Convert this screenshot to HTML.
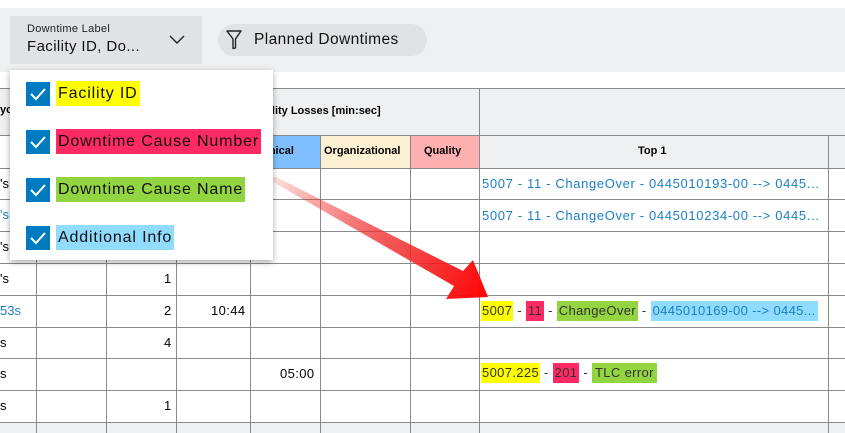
<!DOCTYPE html>
<html><head><meta charset="utf-8"><style>
*{margin:0;padding:0;box-sizing:border-box}
body{width:845px;height:433px;overflow:hidden;background:#fff;font-family:"Liberation Sans",sans-serif;position:relative;color:#000}
.a{position:absolute}
.vl{position:absolute;width:1px;background:#8a8a8a}
.hl{position:absolute;height:1px;background:#8a8a8a}
.t{position:absolute;font-size:13px;white-space:nowrap}
.b{font-weight:bold;font-size:11px}
.lnk{color:#1a7fc6}
.hy{background:#ffff00}.hr{background:#ff2a64}.hg{background:#92d540}.hc{background:#8fdcff}
.cb{position:absolute;left:16px;width:24px;height:24px;background:#007bc0}
.lab{position:absolute;left:46px;height:25px;line-height:25px;font-size:16px;padding:0 2px;color:#111;letter-spacing:.85px}
.hs{display:inline-block;height:20px;line-height:20px;padding:0 2px}
.top{letter-spacing:.65px}
</style></head><body>
<div class="a" style="left:0;top:8px;width:845px;height:64px;background:#eff0f2"></div>
<div class="a" style="left:10px;top:16px;width:192px;height:48px;background:#e0e2e5"></div>
<div class="t" style="left:27px;top:23px;font-size:11px;color:#222;letter-spacing:.3px">Downtime Label</div>
<div class="t" style="left:27px;top:38px;font-size:15px;color:#111;letter-spacing:.4px">Facility ID, Do...</div>
<svg class="a" style="left:168px;top:33px" width="18" height="12"><path d="M2 3 L9 10 L16 3" fill="none" stroke="#222" stroke-width="1.4"/></svg>
<div class="a" style="left:218px;top:24px;width:209px;height:32px;background:#e0e2e5;border-radius:16px"></div>
<svg class="a" style="left:225px;top:29px" width="18" height="22"><path d="M2 2 H16 L10.5 10 V19 L8 19.5 V10 Z" fill="none" stroke="#222" stroke-width="1.4" stroke-linejoin="round"/></svg>
<div class="t" style="left:254px;top:31px;font-size:15.5px;color:#111;letter-spacing:.4px">Planned Downtimes</div>

<div class="a" style="left:0;top:88px;width:845px;height:47px;background:#eff0f2"></div>
<div class="a" style="left:250px;top:135px;width:70px;height:33px;background:#7fbfff"></div>
<div class="a" style="left:320px;top:135px;width:90px;height:33px;background:#fdefd1"></div>
<div class="a" style="left:410px;top:135px;width:69px;height:33px;background:#ffb0b0"></div>
<div class="a" style="left:479px;top:135px;width:366px;height:33px;background:#eff0f2"></div>
<div class="a" style="left:0;top:422px;width:845px;height:11px;background:#eff0f2"></div>
<div class="hl" style="left:0;top:88px;width:845px"></div>
<div class="hl" style="left:0;top:135px;width:845px"></div>
<div class="hl" style="left:0;top:168px;width:845px"></div>
<div class="hl" style="left:0;top:199px;width:845px"></div>
<div class="hl" style="left:0;top:231px;width:845px"></div>
<div class="hl" style="left:0;top:263px;width:845px"></div>
<div class="hl" style="left:0;top:295px;width:845px"></div>
<div class="hl" style="left:0;top:327px;width:845px"></div>
<div class="hl" style="left:0;top:358px;width:845px"></div>
<div class="hl" style="left:0;top:390px;width:845px"></div>
<div class="hl" style="left:0;top:422px;width:845px"></div>
<div class="vl" style="left:36px;top:135px;height:298px"></div>
<div class="vl" style="left:106px;top:135px;height:298px"></div>
<div class="vl" style="left:176px;top:135px;height:298px"></div>
<div class="vl" style="left:250px;top:135px;height:298px"></div>
<div class="vl" style="left:320px;top:135px;height:298px"></div>
<div class="vl" style="left:410px;top:135px;height:298px"></div>
<div class="vl" style="left:479px;top:88px;height:345px"></div>
<div class="vl" style="left:828px;top:135px;height:298px"></div>

<div class="t b" style="left:0;top:104px">yc</div>
<div class="t b" style="left:256px;top:105px">ability Losses [min:sec]</div>
<div class="t b" style="left:256px;top:145px">chnical</div>
<div class="t b" style="left:324px;top:145px">Organizational</div>
<div class="t b" style="left:424px;top:145px">Quality</div>
<div class="t b" style="left:638px;top:145px">Top 1</div>

<div class="t" style="left:0;top:176px">'s</div>
<div class="t lnk" style="left:0;top:207px">'s</div>
<div class="t" style="left:0;top:239px">'s</div>
<div class="t" style="left:0;top:271px">'s</div>
<div class="t lnk" style="left:0;top:303px">53s</div>
<div class="t" style="left:0;top:335px">s</div>
<div class="t" style="left:0;top:366px">s</div>
<div class="t" style="left:0;top:398px">s</div>
<div class="t" style="left:164px;top:271px">1</div>
<div class="t" style="left:164px;top:303px">2</div>
<div class="t" style="left:164px;top:335px">4</div>
<div class="t" style="left:164px;top:398px">1</div>
<div class="t" style="left:211px;top:303px;letter-spacing:.4px">10:44</div>
<div class="t" style="left:280px;top:366px;letter-spacing:.4px">05:00</div>

<div class="t lnk top" style="left:482px;top:176px">5007 - 11 - ChangeOver - 0445010193-00 --&gt; 0445...</div>
<div class="t lnk top" style="left:482px;top:208px">5007 - 11 - ChangeOver - 0445010234-00 --&gt; 0445...</div>
<div class="t" style="left:481px;top:301px;color:#333;letter-spacing:.35px"><span class="hs hy" style="padding:0 1px">5007</span> - <span class="hs hr">11</span> - <span class="hs hg">ChangeOver</span> - <span class="hs hc lnk">0445010169-00 --&gt; 0445...</span></div>
<div class="t" style="left:481px;top:363px;color:#333;letter-spacing:.35px"><span class="hs hy" style="padding:0 1px">5007.225</span> - <span class="hs hr">201</span> - <span class="hs hg" style="padding:0 3px">TLC error</span></div>

<svg class="a" style="left:0;top:0" width="845" height="433">
<defs><linearGradient id="g" x1="270" y1="180" x2="490" y2="300" gradientUnits="userSpaceOnUse"><stop offset="0" stop-color="#e00" stop-opacity="0.1"/><stop offset="0.5" stop-color="#e33" stop-opacity="0.8"/><stop offset="1" stop-color="#f00"/></linearGradient></defs>
<polygon points="266,178 276,177 463,271 473,260 488,297 446,299 454,286" fill="url(#g)"/>
</svg>

<div class="a" style="left:10px;top:70px;width:263px;height:190px;background:#fff;box-shadow:0 2px 6px rgba(0,0,0,.35)">
<div class="cb" style="top:12px"></div><div class="lab hy" style="top:11px">Facility ID</div>
<div class="cb" style="top:60px"></div><div class="lab hr" style="top:59px">Downtime Cause Number</div>
<div class="cb" style="top:108px"></div><div class="lab hg" style="top:107px">Downtime Cause Name</div>
<div class="cb" style="top:156px"></div><div class="lab hc" style="top:155px">Additional Info</div>
<svg class="a" style="left:16px;top:12px" width="24" height="180"><g fill="none" stroke="#fff" stroke-width="2"><path d="M5 12 L10 17 L19 7"/><path d="M5 60 L10 65 L19 55"/><path d="M5 108 L10 113 L19 103"/><path d="M5 156 L10 161 L19 151"/></g></svg>
</div>
</body></html>
